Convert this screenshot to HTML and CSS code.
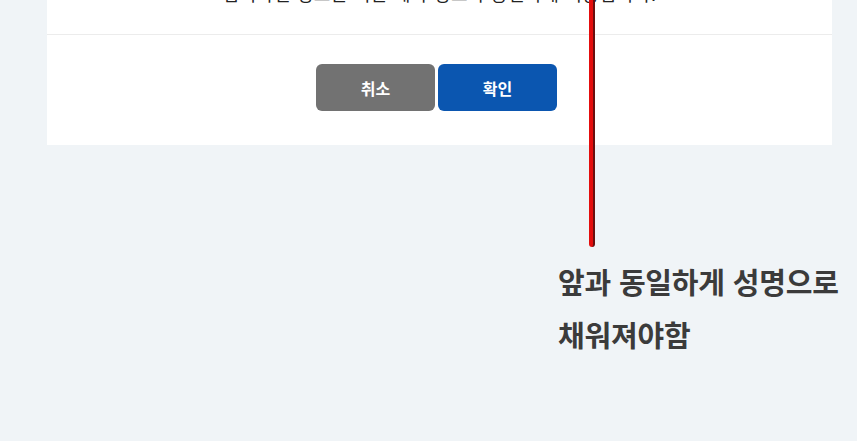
FILE: index.html
```html
<!DOCTYPE html>
<html lang="ko">
<head>
<meta charset="utf-8">
<link rel="stylesheet" href="styles.css">
</head>
<body>
<div class="card">
  <div class="card-body">
    <p class="msg">입력하신 정보는 기존 계좌 정보와 동일하게 적용됩니다.</p>
  </div>
  <div class="card-footer">
    <button class="btn btn-cancel">취소</button>
    <button class="btn btn-ok">확인</button>
  </div>
</div>
<div class="note">앞과 동일하게 성명으로<br>채워져야함</div>
<div class="marker"></div>
</body>
</html>
```
FILE: styles.css
```css
html, body {
  margin: 0;
  padding: 0;
}
body {
  background: #f0f4f7;
  width: 857px;
  height: 441px;
  overflow: hidden;
  position: relative;
  font-family: "Noto Sans CJK KR", "Noto Sans", sans-serif;
}
.card {
  margin-left: 47px;
  width: 785px;
  background: #ffffff;
}
.card-body {
  height: 34px;
  overflow: hidden;
  border-bottom: 1px solid #ececec;
  display: flex;
  justify-content: center;
}
.msg {
  margin: -20px 0 0 0;
  font-size: 18px;
  line-height: 26px;
  color: #222;
  white-space: nowrap;
  letter-spacing: 0.6px;
}
.card-footer {
  display: flex;
  justify-content: center;
  gap: 3px;
  padding: 29px 0 34px 0;
  padding-right: 6px;
}
.btn {
  width: 119px;
  height: 47px;
  border: none;
  border-radius: 6px;
  color: #fff;
  font-family: "Noto Sans CJK KR", sans-serif;
  font-weight: 700;
  font-size: 16px;
  padding: 0;
}
.btn-cancel {
  background: #727272;
}
.btn-ok {
  background: #0b56b0;
}
.note {
  margin: 110px 0 0 558px;
  font-size: 29px;
  font-weight: 700;
  line-height: 53px;
  color: #3b3b3b;
  letter-spacing: -0.2px;
}
.marker {
  position: absolute;
  left: 589px;
  top: 0;
  width: 4px;
  height: 247px;
  background: #e40d0d;
  border-right: 2px solid #6b0f0f;
  border-radius: 0 0 3px 3px;
}
```
